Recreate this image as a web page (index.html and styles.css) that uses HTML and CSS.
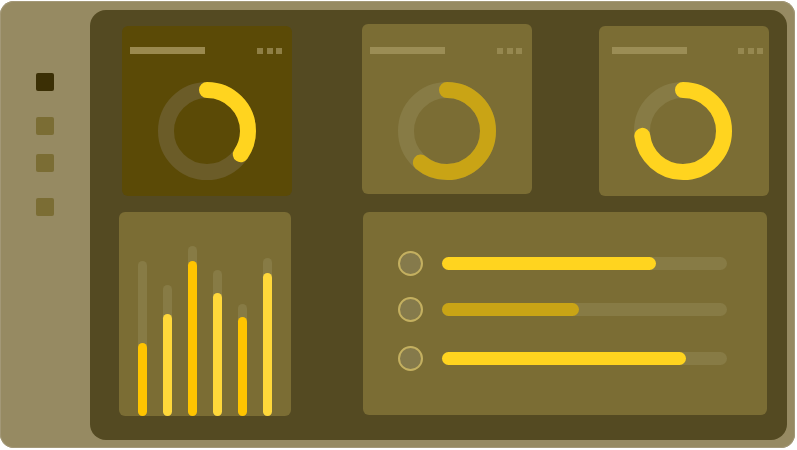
FILE: index.html
```html
<!DOCTYPE html>
<html>
<head>
<meta charset="utf-8">
<link rel="stylesheet" href="styles.css">
</head>
<body>
<div class="frame">
  <div class="sidebar">
    <span class="nav active"></span>
    <span class="nav n2"></span>
    <span class="nav n3"></span>
    <span class="nav n4"></span>
  </div>
  <div class="panel">
    <div class="row top">
      <div class="card dark c1">
        <div class="head"><span class="title"></span><span class="dots"><i></i><i></i><i></i></span></div>
        <svg class="donut" width="98" height="98" viewBox="0 0 98 98">
          <circle cx="49" cy="49" r="41" class="trk"/>
          <circle cx="49" cy="49" r="41" class="arc yel" stroke-dasharray="89 300" transform="rotate(-90 49 49)"/>
        </svg>
      </div>
      <div class="card c2">
        <div class="head"><span class="title"></span><span class="dots"><i></i><i></i><i></i></span></div>
        <svg class="donut" width="98" height="98" viewBox="0 0 98 98">
          <circle cx="49" cy="49" r="41" class="trk"/>
          <circle cx="49" cy="49" r="41" class="arc gold" stroke-dasharray="157 300" transform="rotate(-90 49 49)"/>
        </svg>
      </div>
      <div class="card c3">
        <div class="head"><span class="title"></span><span class="dots"><i></i><i></i><i></i></span></div>
        <svg class="donut" width="98" height="98" viewBox="0 0 98 98">
          <circle cx="49" cy="49" r="41" class="trk"/>
          <circle cx="49" cy="49" r="41" class="arc yel" stroke-dasharray="188 300" transform="rotate(-90 49 49)"/>
        </svg>
      </div>
    </div>
    <div class="row bottom">
      <div class="card bars">
        <div class="bar" style="height:155px"><div class="fill a" style="height:73px"></div></div>
        <div class="bar" style="height:131px"><div class="fill b" style="height:102px"></div></div>
        <div class="bar" style="height:170px"><div class="fill a" style="height:155px"></div></div>
        <div class="bar" style="height:146px"><div class="fill b" style="height:123px"></div></div>
        <div class="bar" style="height:112px"><div class="fill a" style="height:99px"></div></div>
        <div class="bar" style="height:158px"><div class="fill b" style="height:143px"></div></div>
      </div>
      <div class="card list">
        <div class="item"><span class="dot"></span><span class="prog"><span class="pfill yelbg" style="width:75%"></span></span></div>
        <div class="item i2"><span class="dot"></span><span class="prog"><span class="pfill goldbg" style="width:48%"></span></span></div>
        <div class="item i3"><span class="dot"></span><span class="prog"><span class="pfill yelbg" style="width:85.6%"></span></span></div>
      </div>
    </div>
  </div>
</div>
</body>
</html>
```
FILE: styles.css
```css
html, body {
  margin: 0;
  padding: 0;
  background: #ffffff;
  font-family: "Liberation Sans", Arial, sans-serif;
}
.frame {
  width: 795px;
  height: 447px;
  margin-top: 1px;
  border-radius: 14px;
  background: #968a62;
  display: flex;
  box-sizing: border-box;
  box-shadow: inset 0 0 0 1px #a39877;
}
.sidebar {
  width: 90px;
  flex: none;
  display: flex;
  flex-direction: column;
  padding: 72px 0 0 36px;
  box-sizing: border-box;
}
.nav {
  display: block;
  width: 18px;
  height: 18px;
  border-radius: 2px;
  background: #7b6d34;
}
.nav.active { background: #3b2f05; }
.nav.n2 { margin-top: 26px; }
.nav.n3 { margin-top: 19px; }
.nav.n4 { margin-top: 26px; }
.panel {
  width: 697px;
  height: 430px;
  margin-top: 9px;
  border-radius: 16px;
  background: #544a22;
  box-sizing: border-box;
  padding-top: 14px;
}
.row { display: flex; }
.top { padding-left: 32px; height: 172px; }
.bottom { padding-left: 29px; margin-top: 16px; }
.card {
  background: #7b6d34;
  border-radius: 6px;
  box-sizing: border-box;
}
.c1, .c2, .c3 {
  width: 170px;
  height: 170px;
  padding: 21px 10px 0 8px;
  display: flex;
  flex-direction: column;
}
.c1 { margin-top: 2px; }
.c2 { margin-left: 70px; }
.c2 .head { margin-top: 2px; }
.c3 { margin-left: 67px; margin-top: 2px; padding-left: 13px; padding-right: 6px; }
.dark { background: #5b4a06; }
.head {
  display: flex;
  justify-content: space-between;
  align-items: center;
  height: 7px;
}
.title {
  display: block;
  width: 75px;
  height: 7px;
  background: #9b8d55;
}
.dark .title { background: #9a894e; }
.dots { display: flex; gap: 3.5px; }
.dots i {
  display: block;
  width: 6px;
  height: 6px;
  background: #968850;
}
.dark .dots i { background: #8f7f45; }
.donut {
  display: block;
  margin: 28px auto 0;
}
.c1 .donut { margin-left: 28px; }
.c2 .donut { margin-left: 28px; }
.c3 .donut { margin-left: 22px; }
.trk {
  fill: none;
  stroke: #877b45;
  stroke-width: 16;
}
.dark .trk { stroke: #6b5c28; }
.arc {
  fill: none;
  stroke-width: 16;
  stroke-linecap: round;
}
.yel { stroke: #ffd41f; }
.gold { stroke: #c9a415; }
.bars {
  width: 172px;
  height: 204px;
  display: flex;
  align-items: flex-end;
  gap: 16px;
  padding-left: 19px;
}
.bar {
  width: 9px;
  border-radius: 4.5px;
  background: #877b45;
  display: flex;
  flex-direction: column;
  justify-content: flex-end;
}
.fill {
  border-radius: 4.5px;
  width: 9px;
}
.fill.a { background: #ffc400; }
.fill.b { background: #ffd83a; }
.list {
  width: 404px;
  height: 203px;
  margin-left: 72px;
  padding: 39px 40px 0 35px;
  display: flex;
  flex-direction: column;
}
.item {
  display: flex;
  align-items: center;
  gap: 19px;
  height: 25px;
}
.item.i2 { margin-top: 21px; }
.item.i3 { margin-top: 23.5px; }
.dot {
  display: block;
  width: 25px;
  height: 25px;
  box-sizing: border-box;
  border-radius: 50%;
  background: #857a4b;
  border: 2px solid #c4b060;
  flex: none;
}
.prog {
  display: block;
  flex: 1;
  height: 13px;
  border-radius: 6.5px;
  background: #877b45;
  position: relative;
}
.pfill {
  display: block;
  height: 13px;
  border-radius: 6.5px;
}
.yelbg { background: #ffd41f; }
.goldbg { background: #c9a415; }
```
